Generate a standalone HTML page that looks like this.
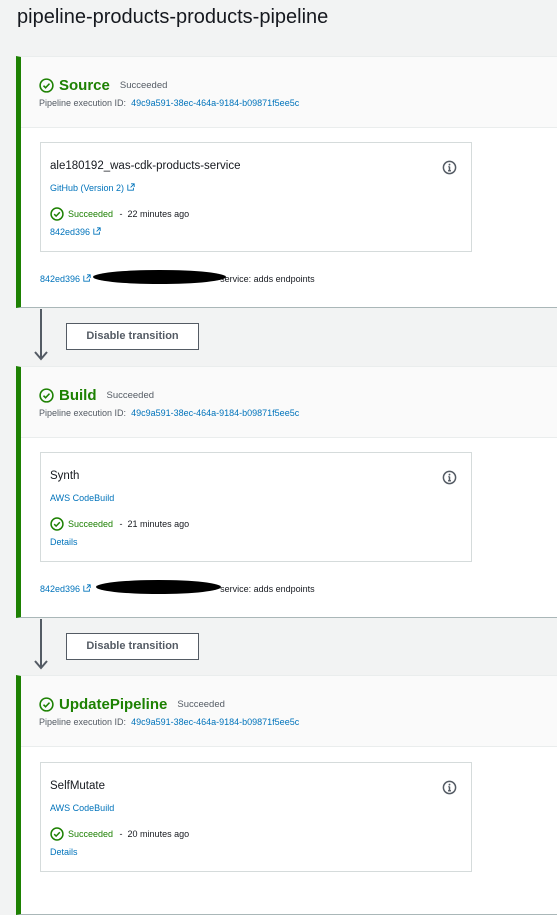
<!DOCTYPE html>
<html><head><style>
*{margin:0;padding:0;box-sizing:border-box}
body{width:557px;height:894px;overflow:hidden;background:#f2f3f3;font-family:"Liberation Sans",Arial,sans-serif;color:#16191f;position:relative}
.a{position:absolute;white-space:nowrap}
h1{position:absolute;left:17px;top:6px;font-size:20px;font-weight:400;color:#16191f}
.stage{position:absolute;left:16px;width:541px;background:#fff;border-left:5px solid #1d8102;border-top:1px solid #eaeded;border-bottom:1px solid #aab7b8}
.hdr{position:absolute;left:0;top:0;right:0;height:71px;background:#fafafa;border-bottom:1px solid #eaeded}
.ttl{left:18px;top:20px;font-size:15px;font-weight:700;color:#1d8102;display:flex;align-items:center;gap:5px}
.ttl span.s{font-size:9.5px;font-weight:400;color:#545b64;margin-left:5px}
.eid{left:18px;top:41px;font-size:9px;color:#545b64}
.lnk{color:#0073bb}
.card{position:absolute;left:19px;top:85px;width:432px;height:110px;border:1px solid #d5dbdb;background:#fff}
.nm{left:9px;top:17px;font-size:11.5px}
.sub{left:9px;top:40px;font-size:9px;color:#0073bb}
.st{left:9px;top:64px;font-size:9px;display:flex;align-items:center;gap:4px}
.st .g{color:#1d8102}
.dt{left:9px;top:84px;font-size:9px;color:#0073bb}
.info{right:14px;top:17px}
.cm{left:19px;top:217px;font-size:9px}
.blk{position:absolute;background:#000;border-radius:50%}
.arrow{position:absolute;left:40px;width:2px;background:#545b64}
.btn{position:absolute;left:66px;width:133px;height:27px;border:1px solid #545b64;background:#fff;font-size:11px;font-weight:700;color:#545b64;text-align:center;line-height:25px}
</style></head><body>
<h1>pipeline-products-products-pipeline</h1>

<svg width="0" height="0" style="position:absolute"><defs>
<symbol id="ck" viewBox="0 0 16 16"><circle cx="8" cy="8" r="6.8" fill="none" stroke="#1d8102" stroke-width="1.7"/><path d="M4.8 8.2l2.2 2.2 4.2-4.4" fill="none" stroke="#1d8102" stroke-width="1.7"/></symbol>
<symbol id="inf" viewBox="0 0 16 16"><circle cx="8" cy="8" r="6.5" fill="none" stroke="#545b64" stroke-width="1.6"/><path d="M8 7v4.5M6.5 11.5h3M6.8 7H8" stroke="#545b64" stroke-width="1.6" fill="none"/><circle cx="8" cy="4.8" r="1" fill="#545b64"/></symbol>
<symbol id="ext" viewBox="0 0 10 10"><path d="M1 2v7h7V6M5 1h4v4M9 1L4.5 5.5" fill="none" stroke="#0073bb" stroke-width="1.1"/></symbol>
</defs></svg>

<!-- Stage 1 -->
<div class="stage" style="top:56px;height:252px">
 <div class="hdr">
  <div class="a ttl"><svg width="15" height="15"><use href="#ck"/></svg>Source<span class="s">Succeeded</span></div>
  <div class="a eid">Pipeline execution ID:&nbsp; <span class="lnk">49c9a591-38ec-464a-9184-b09871f5ee5c</span></div>
 </div>
 <div class="card">
  <div class="a nm">ale180192_was-cdk-products-service</div>
  <svg class="a info" width="15" height="15"><use href="#inf"/></svg>
  <div class="a sub">GitHub (Version 2) <svg width="8" height="8"><use href="#ext"/></svg></div>
  <div class="a st"><svg width="14" height="14"><use href="#ck"/></svg><span class="g">Succeeded</span> &nbsp;-&nbsp; 22 minutes ago</div>
  <div class="a dt">842ed396 <svg width="8" height="8"><use href="#ext"/></svg></div>
 </div>
 <div class="a cm"><span class="lnk">842ed396</span> <svg width="8" height="8"><use href="#ext"/></svg> <span style="margin-left:127px">service: adds endpoints</span></div>
 <div class="blk" style="left:72px;top:213px;width:133px;height:14px"></div>
</div>

<div class="arrow" style="top:309px;height:50px"></div>
<svg class="a" style="left:34px;top:351px" width="14" height="10"><path d="M1 1l6 7 6-7" fill="none" stroke="#545b64" stroke-width="2"/></svg>
<div class="btn" style="top:323px">Disable transition</div>

<!-- Stage 2 -->
<div class="stage" style="top:366px;height:252px">
 <div class="hdr">
  <div class="a ttl"><svg width="15" height="15"><use href="#ck"/></svg>Build<span class="s">Succeeded</span></div>
  <div class="a eid">Pipeline execution ID:&nbsp; <span class="lnk">49c9a591-38ec-464a-9184-b09871f5ee5c</span></div>
 </div>
 <div class="card">
  <div class="a nm">Synth</div>
  <svg class="a info" width="15" height="15"><use href="#inf"/></svg>
  <div class="a sub">AWS CodeBuild</div>
  <div class="a st"><svg width="14" height="14"><use href="#ck"/></svg><span class="g">Succeeded</span> &nbsp;-&nbsp; 21 minutes ago</div>
  <div class="a dt">Details</div>
 </div>
 <div class="a cm"><span class="lnk">842ed396</span> <svg width="8" height="8"><use href="#ext"/></svg> <span style="margin-left:127px">service: adds endpoints</span></div>
 <div class="blk" style="left:75px;top:213px;width:125px;height:14px"></div>
</div>

<div class="arrow" style="top:619px;height:49px"></div>
<svg class="a" style="left:34px;top:660px" width="14" height="10"><path d="M1 1l6 7 6-7" fill="none" stroke="#545b64" stroke-width="2"/></svg>
<div class="btn" style="top:633px">Disable transition</div>

<!-- Stage 3 -->
<div class="stage" style="top:675px;height:240px">
 <div class="hdr">
  <div class="a ttl"><svg width="15" height="15"><use href="#ck"/></svg>UpdatePipeline<span class="s">Succeeded</span></div>
  <div class="a eid">Pipeline execution ID:&nbsp; <span class="lnk">49c9a591-38ec-464a-9184-b09871f5ee5c</span></div>
 </div>
 <div class="card" style="top:86px">
  <div class="a nm">SelfMutate</div>
  <svg class="a info" width="15" height="15"><use href="#inf"/></svg>
  <div class="a sub">AWS CodeBuild</div>
  <div class="a st"><svg width="14" height="14"><use href="#ck"/></svg><span class="g">Succeeded</span> &nbsp;-&nbsp; 20 minutes ago</div>
  <div class="a dt">Details</div>
 </div>
</div>
</body></html>
